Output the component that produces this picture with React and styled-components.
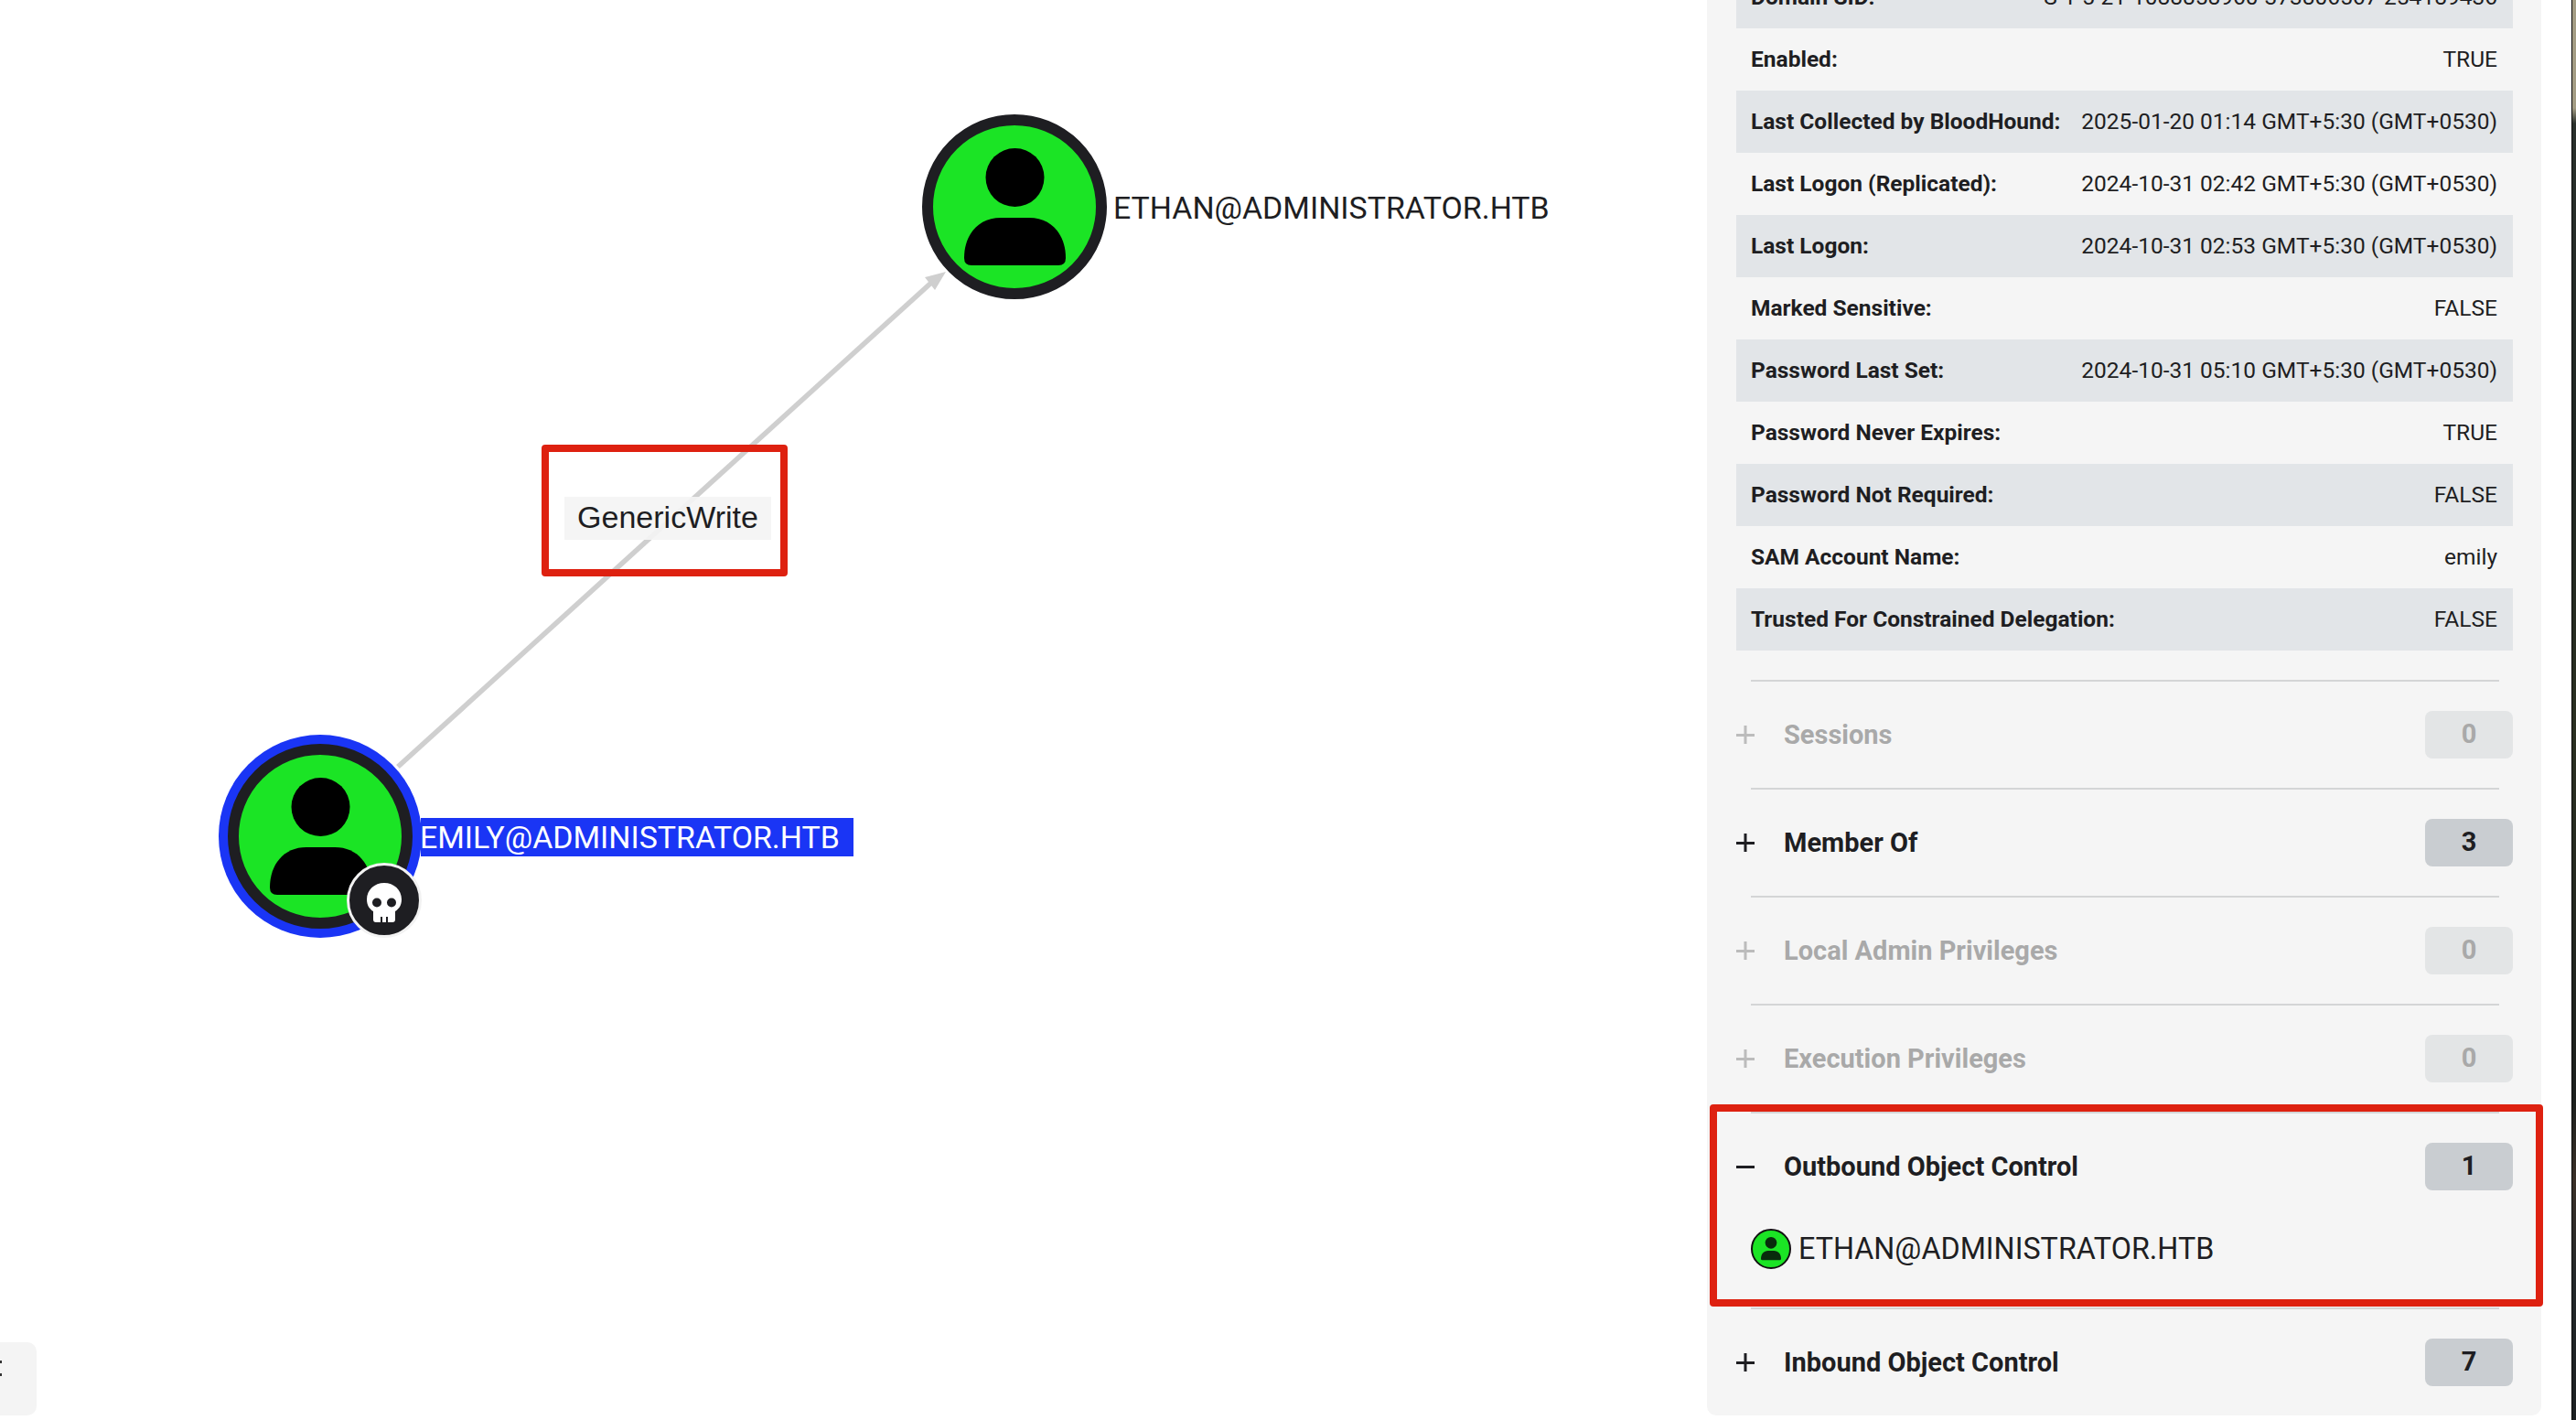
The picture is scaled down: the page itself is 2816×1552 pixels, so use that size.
import React from 'react';
import styled, { createGlobalStyle } from 'styled-components';

const GlobalStyle = createGlobalStyle`
  html, body {
    margin: 0;
    padding: 0;
    background: #fff;
    overflow: hidden;
  }
  body {
    font-family: Roboto, "Liberation Sans", sans-serif;
    color: #1e1e22;
  }
`;

const Page = styled.div`
  display: flex;
  width: 2816px;
  height: 1552px;
  overflow: hidden;
`;

const Canvas = styled.div`
  position: relative;
  flex: 1;
`;

const EdgeLayer = styled.svg`
  position: absolute;
  inset: 0;
  width: 100%;
  height: 100%;
`;

const NodeCircle = styled.div`
  position: absolute;
  left: ${props => props.x}px;
  top: ${props => props.y}px;
  width: ${props => props.size}px;
  height: ${props => props.size}px;
  box-sizing: border-box;
  border-radius: 50%;
  color: #000;
  background: #1be425;
  border: ${props => props.ring}px solid #1e1e22;
  box-shadow: ${props => (props.selected ? '0 0 0 10px #1a35f5' : 'none')};
  display: flex;
  align-items: center;
  justify-content: center;
`;

const NodeLabel = styled.div`
  position: absolute;
  left: ${props => props.x}px;
  top: ${props => props.y}px;
  height: 42px;
  line-height: 44px;
  font-size: 33.9px;
  white-space: nowrap;
  padding: ${props => (props.selected ? '0 15px 0 0' : '0')};
  text-indent: ${props => (props.selected ? '-1px' : '0')};
  color: ${props => (props.selected ? '#fff' : '#1e1e22')};
  background: ${props => (props.selected ? '#1a35f5' : 'transparent')};
`;

const SkullBadge = styled.div`
  position: absolute;
  left: 379px;
  top: 943px;
  width: 82px;
  height: 82px;
  box-sizing: border-box;
  padding-top: 4px;
  border-radius: 50%;
  background: #1e1e22;
  border: 3px solid #f2f2f2;
  display: flex;
  align-items: center;
  justify-content: center;
`;

const EdgeLabel = styled.div`
  position: absolute;
  left: 617px;
  top: 543px;
  width: 226px;
  height: 47px;
  line-height: 45px;
  text-align: center;
  font-family: "Liberation Sans", Arial, sans-serif;
  font-size: 34px;
  color: #1e1e22;
  background: rgba(244, 244, 244, 0.92);
`;

const RedBox = styled.div`
  position: absolute;
  box-sizing: border-box;
  border: 8px solid #de2110;
  border-radius: 4px;
  pointer-events: none;
  z-index: 2;
`;

const EdgeRedBox = styled(RedBox)`
  left: 592px;
  top: 486px;
  width: 269px;
  height: 144px;
`;

const ControlsStub = styled.div`
  position: absolute;
  left: -10px;
  top: 1467px;
  width: 50px;
  height: 80px;
  border-radius: 10px;
  background: #f4f4f4;
`;

const StubDot = styled.span`
  position: absolute;
  left: 10px;
  top: ${props => props.y}px;
  width: 2px;
  height: 3px;
  background: #333;
`;

const Panel = styled.aside`
  flex: none;
  align-self: flex-end;
  width: 912px;
  margin: 0 33px 5px 0;
  box-sizing: border-box;
  padding: 0 31px 0 32px;
  background: #f5f5f5;
  border-radius: 0 0 10px 10px;
`;

// sliver of the window behind the browser, at the far right of the capture
const BackdropEdge = styled.div`
  flex: none;
  width: 4px;
  border-left: 1px solid #0a0a0a;
  background: linear-gradient(
    180deg,
    #a39c84 0,
    #a39c84 118px,
    #2a302c 135px,
    #1f2622 500px,
    #2b3022 800px,
    #1c201e 1200px,
    #3a3028 1290px,
    #23282a 1400px,
    #1c2022 100%
  );
`;

const PropRow = styled.div`
  display: flex;
  justify-content: space-between;
  align-items: center;
  height: 68px;
  box-sizing: border-box;
  padding: 0 17px 1px 16px;
  font-size: 24.5px;
  white-space: nowrap;
  background: ${props => (props.shaded ? '#e2e5e8' : 'transparent')};
`;

const PropName = styled.span`
  font-weight: 700;
`;

const PropValue = styled.span`
  font-weight: 400;
`;

const PropTable = styled.div`
  margin-bottom: 32px;
`;

const Section = styled.section`
  position: relative;
  &::before {
    content: '';
    display: block;
    height: 2px;
    margin: 0 15px 0 16px;
    background: #d4d5d6;
  }
`;

const SectionHeader = styled.div`
  display: flex;
  align-items: center;
  height: 116px;
  color: ${props => (props.muted ? '#a9a9a9' : '#1e1e22')};
`;

const Toggle = styled.svg`
  flex: none;
  width: 20px;
  height: 20px;
  margin-right: 32px;
`;

const SectionTitle = styled.span`
  flex: 1;
  font-size: 29px;
  font-weight: 700;
`;

const CountBadge = styled.span`
  flex: none;
  width: 96px;
  height: 52px;
  line-height: 50px;
  text-align: center;
  border-radius: 8px;
  font-size: 29px;
  font-weight: 700;
  background: ${props => (props.muted ? '#e3e5e6' : '#c9cdd1')};
`;

const SectionBody = styled.div`
  height: 96px;
  box-sizing: border-box;
  padding: 10px 0 0 16px;
`;

const ListItem = styled.div`
  display: flex;
  align-items: center;
  height: 44px;
  gap: 8px;
  font-size: 32.3px;
  white-space: nowrap;
`;

const ListIcon = styled.div`
  flex: none;
  width: 44px;
  height: 44px;
  box-sizing: border-box;
  border-radius: 50%;
  color: #082c0c;
  background: #1be425;
  border: 2px solid #111;
  display: flex;
  align-items: center;
  justify-content: center;
`;

const SectionRedBox = styled(RedBox)`
  left: -29px;
  right: -33px;
  top: -8px;
  bottom: 1px;
`;

const UserGlyph = ({ width }) => (
  <svg width={width} viewBox="0 0 111 128" fill="currentColor">
    <ellipse cx="55.5" cy="32" rx="32" ry="32" />
    <path d="M0 120 C0 95 15 76 40 76 H71 C96 76 111 95 111 120 Q111 128 103 128 H8 Q0 128 0 120 Z" />
  </svg>
);

const SkullGlyph = () => (
  <svg width="38" height="43" viewBox="0 0 38 43">
    <path
      fill="#fff"
      fillRule="evenodd"
      d="M19 0 C29.5 0 38 7.5 38 18 C38 25 34.5 29 31 31 V40 Q31 43 28 43 H10 Q7 43 7 40 V31 C3.5 29 0 25 0 18 C0 7.5 8.5 0 19 0 Z M11 16.5 A5 5 0 1 0 11 26.5 A5 5 0 1 0 11 16.5 Z M27 16.5 A5 5 0 1 0 27 26.5 A5 5 0 1 0 27 16.5 Z M15 37 H17 V43 H15 Z M21 37 H23 V43 H21 Z"
    />
  </svg>
);

const PlusIcon = ({ open, muted }) => (
  <Toggle viewBox="0 0 20 20" style={{ opacity: muted ? 0.75 : 1 }}>
    <rect x="0" y="9" width="20" height="3" fill="currentColor" />
    {!open && <rect x="8.5" y="0" width="3" height="20" fill="currentColor" />}
  </Toggle>
);

const PROPERTIES = [
  ['Domain SID:', 'S-1-5-21-1088858960-373806567-254189436'],
  ['Enabled:', 'TRUE'],
  ['Last Collected by BloodHound:', '2025-01-20 01:14 GMT+5:30 (GMT+0530)'],
  ['Last Logon (Replicated):', '2024-10-31 02:42 GMT+5:30 (GMT+0530)'],
  ['Last Logon:', '2024-10-31 02:53 GMT+5:30 (GMT+0530)'],
  ['Marked Sensitive:', 'FALSE'],
  ['Password Last Set:', '2024-10-31 05:10 GMT+5:30 (GMT+0530)'],
  ['Password Never Expires:', 'TRUE'],
  ['Password Not Required:', 'FALSE'],
  ['SAM Account Name:', 'emily'],
  ['Trusted For Constrained Delegation:', 'FALSE'],
];

const SECTIONS = [
  { title: 'Sessions', count: 0 },
  { title: 'Member Of', count: 3 },
  { title: 'Local Admin Privileges', count: 0 },
  { title: 'Execution Privileges', count: 0 },
  { title: 'Outbound Object Control', count: 1, open: true },
  { title: 'Inbound Object Control', count: 7 },
];

const App = () => (
  <Page>
    <GlobalStyle />
    <Canvas>
      <EdgeLayer>
        <line x1="435" y1="838" x2="1018" y2="309" stroke="#cfcfcf" strokeWidth="5.5" />
        <polygon points="1034,297 1011,303 1022,317" fill="#cfcfcf" />
      </EdgeLayer>
      <NodeCircle x={1008} y={125} size={202} ring={12}>
        <UserGlyph width={111} />
      </NodeCircle>
      <NodeLabel x={1217} y={206}>ETHAN@ADMINISTRATOR.HTB</NodeLabel>
      <NodeCircle x={249} y={813} size={202} ring={12} selected>
        <UserGlyph width={111} />
      </NodeCircle>
      <NodeLabel x={460} y={894} selected>EMILY@ADMINISTRATOR.HTB</NodeLabel>
      <SkullBadge>
        <SkullGlyph />
      </SkullBadge>
      <EdgeLabel>GenericWrite</EdgeLabel>
      <EdgeRedBox />
      <ControlsStub>
        <StubDot y={20} />
        <StubDot y={34} />
      </ControlsStub>
    </Canvas>
    <Panel>
      <PropTable>
        {PROPERTIES.map(([name, value], i) => (
          <PropRow key={name} shaded={i % 2 === 0}>
            <PropName>{name}</PropName>
            <PropValue>{value}</PropValue>
          </PropRow>
        ))}
      </PropTable>
      {SECTIONS.map(({ title, count, open }) => {
        const muted = count === 0;
        return (
          <Section key={title}>
            <SectionHeader muted={muted}>
              <PlusIcon open={open} muted={muted} />
              <SectionTitle>{title}</SectionTitle>
              <CountBadge muted={muted}>{count}</CountBadge>
            </SectionHeader>
            {open && (
              <>
                <SectionBody>
                  <ListItem>
                    <ListIcon>
                      <UserGlyph width={22} />
                    </ListIcon>
                    ETHAN@ADMINISTRATOR.HTB
                  </ListItem>
                </SectionBody>
                <SectionRedBox />
              </>
            )}
          </Section>
        );
      })}
    </Panel>
    <BackdropEdge />
  </Page>
);

export default App;
